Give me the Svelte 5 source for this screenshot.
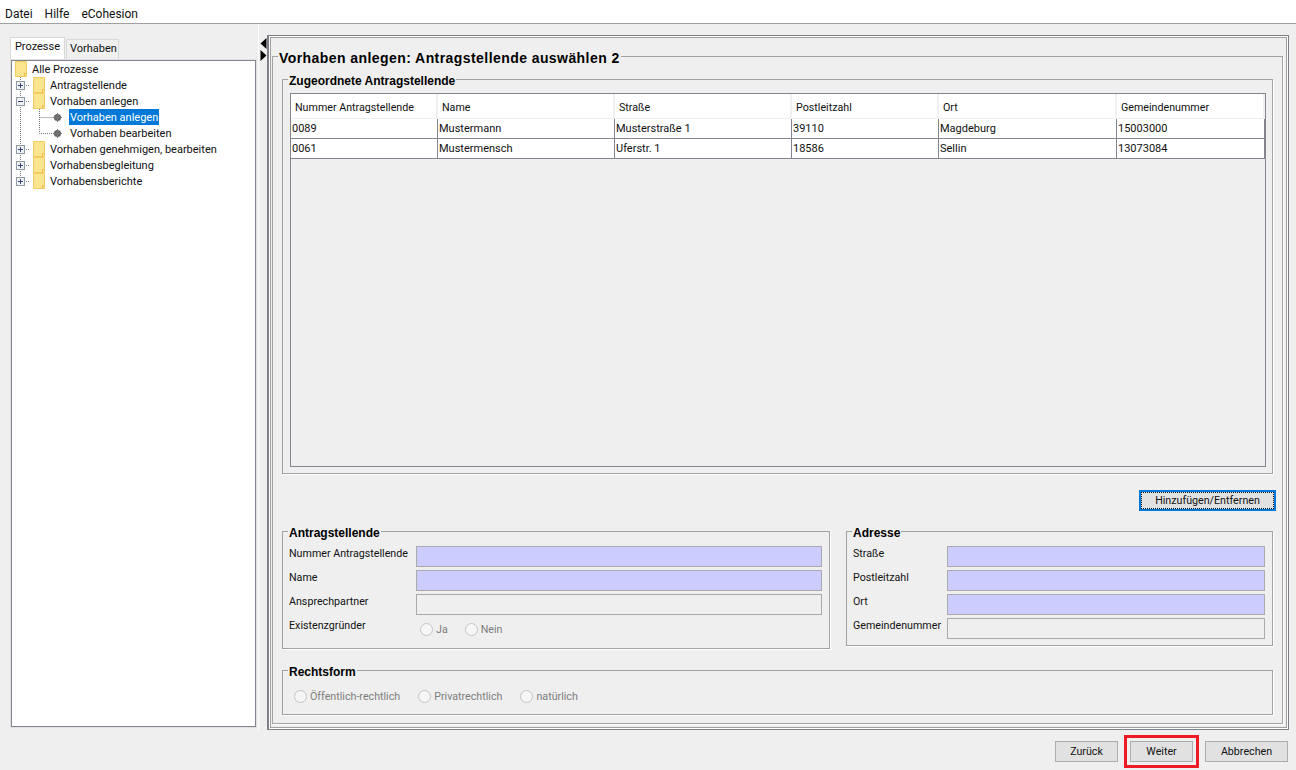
<script>
	const tree = [
		{ label: "Alle Prozesse", kind: "root", gutter: 19 },
		{ label: "Antragstellende", kind: "plus", gutter: 37 },
		{ label: "Vorhaben anlegen", kind: "minus", gutter: 37 },
		{ label: "Vorhaben anlegen", kind: "leaf", gutter: 57, selected: true },
		{ label: "Vorhaben bearbeiten", kind: "leaf", gutter: 57, last: true },
		{ label: "Vorhaben genehmigen, bearbeiten", kind: "plus", gutter: 37 },
		{ label: "Vorhabensbegleitung", kind: "plus", gutter: 37 },
		{ label: "Vorhabensberichte", kind: "plus", gutter: 37, end: true },
	];

	const columns = [
		{ name: "Nummer Antragstellende", width: 147 },
		{ name: "Name", width: 177 },
		{ name: "Straße", width: 177 },
		{ name: "Postleitzahl", width: 147 },
		{ name: "Ort", width: 178 },
		{ name: "Gemeindenummer", width: 148 },
	];

	const rows = [
		["0089", "Mustermann", "Musterstraße 1", "39110", "Magdeburg", "15003000"],
		["0061", "Mustermensch", "Uferstr. 1", "18586", "Sellin", "13073084"],
	];
</script>

{#snippet folder(x)}
	<g transform="translate({x} 0)">
		<path d="M.5 .5H11.5V15.5H.5Z" fill="#fde48f" stroke="#f2cc5e" />
		<path d="M9.5 12.5H11.5M9.5 12.5V15.5" fill="none" stroke="#eebd45" />
	</g>
{/snippet}

<div class="window">
	<nav class="menu">
		<span>Datei</span>
		<span>Hilfe</span>
		<span>eCohesion</span>
	</nav>

	<div class="main">
		<aside class="left">
			<div class="tabs">
				<span class="tab active">Prozesse</span>
				<span class="tab">Vorhaben</span>
			</div>
			<div class="tree">
				{#each tree as node}
					<div class="node">
						<svg class="gutter" width={node.gutter} height="16" viewBox="0 0 {node.gutter} 16">
							{#if node.kind === "root"}
								{@render folder(3)}
							{:else if node.kind === "leaf"}
								<path d="M8.5 0V16" class="dots" />
								<path d={node.last ? "M27.5 0V8.5H41" : "M27.5 0V16M27.5 8.5H41"} class="dots" />
								<circle cx="45.5" cy="8.5" r="3.6" fill="#666" />
								<path d="M45.5 4V13M41 8.5H50" stroke="#777" fill="none" />
							{:else}
								<path d={node.end ? "M8.5 0V8" : "M8.5 0V16"} class="dots" />
								<path d="M14 8.5H18" class="dots" />
								<rect x="4.5" y="4.5" width="8" height="8" fill="#eef0f4" stroke="#8f9aa8" />
								<path d={node.kind === "plus" ? "M6 8.5H11M8.5 6V11" : "M6 8.5H11"} stroke="#3a4a7a" fill="none" />
								{@render folder(21)}
							{/if}
						</svg>
						<span class="label" class:selected={node.selected}>{node.label}</span>
					</div>
				{/each}
			</div>
		</aside>

		<div class="splitter">
			<svg width="7" height="24" viewBox="0 0 7 24">
				<path d="M6.5 0V11L0.5 5.5Z" fill="#000" />
				<path d="M.5 12V23L6.5 17.5Z" fill="#000" />
			</svg>
		</div>

		<section class="panel">
			<fieldset class="group outer">
				<legend class="title">Vorhaben anlegen: Antragstellende auswählen 2</legend>

				<fieldset class="group assigned">
					<legend>Zugeordnete Antragstellende</legend>
					<div class="table">
						<div class="thead">
							{#each columns as col}
								<div class="th" style="width: {col.width}px">{col.name}</div>
							{/each}
						</div>
						{#each rows as row}
							<div class="tr">
								{#each row as cell, i}
									<div class="td" style="width: {columns[i].width}px">{cell}</div>
								{/each}
							</div>
						{/each}
					</div>
				</fieldset>

				<div class="action">
					<button class="btn focused"><span>Hinzufügen/Entfernen</span></button>
				</div>

				<div class="pair">
					<fieldset class="group applicant">
						<legend>Antragstellende</legend>
						<div class="form">
							<span class="fl">Nummer Antragstellende</span>
							<div class="input req"></div>
							<span class="fl">Name</span>
							<div class="input req"></div>
							<span class="fl">Ansprechpartner</span>
							<div class="input"></div>
							<span class="fl">Existenzgründer</span>
							<div class="radios inset">
								<label><input type="radio" disabled />Ja</label>
								<label><input type="radio" disabled />Nein</label>
							</div>
						</div>
					</fieldset>

					<fieldset class="group address">
						<legend>Adresse</legend>
						<div class="form">
							<span class="fl">Straße</span>
							<div class="input req"></div>
							<span class="fl">Postleitzahl</span>
							<div class="input req"></div>
							<span class="fl">Ort</span>
							<div class="input req"></div>
							<span class="fl">Gemeindenummer</span>
							<div class="input"></div>
						</div>
					</fieldset>
				</div>

				<fieldset class="group legal">
					<legend>Rechtsform</legend>
					<div class="radios">
						<label><input type="radio" disabled />Öffentlich-rechtlich</label>
						<label><input type="radio" disabled />Privatrechtlich</label>
						<label><input type="radio" disabled />natürlich</label>
					</div>
				</fieldset>
			</fieldset>
		</section>
	</div>

	<footer class="footer">
		<button class="btn back">Zurück</button>
		<button class="btn next">Weiter</button>
		<button class="btn cancel">Abbrechen</button>
	</footer>
</div>

<style>
	:global(body) {
		margin: 0;
		background: #efefef;
	}
	.window {
		width: 1296px;
		height: 770px;
		display: flex;
		flex-direction: column;
		overflow: hidden;
		background: #efefef;
		color: #111;
		font-family: Roboto, "Liberation Sans", sans-serif;
		font-size: 10.7px;
	}
	.menu {
		flex: none;
		display: flex;
		align-items: center;
		gap: 12px;
		padding: 4px 5px 0;
		height: 19px;
		background: #fff;
		border-bottom: 1px solid #a0a0a0;
		font-size: 12px;
	}
	.main {
		flex: none;
		height: 706px;
		display: flex;
	}
	.left {
		width: 247px;
		margin-left: 10px;
		display: flex;
		flex-direction: column;
		padding-top: 13px;
	}
	.tabs {
		display: flex;
		align-items: flex-end;
		height: 23px;
		flex: none;
	}
	.tab {
		height: 20px;
		line-height: 18px;
		margin-left: 1px;
		padding: 0 1px 0 3px;
		width: 47px;
		text-align: center;
		border: 1px solid #d9d9d9;
		border-bottom: none;
		background: #f0f0f0;
		font-size: 11px;
	}
	.tab.active {
		height: 22px;
		line-height: 18px;
		margin-left: 0;
		padding: 0 2px;
		width: 49px;
		background: #fff;
	}
	.tree {
		width: 245px;
		height: 667px;
		box-sizing: border-box;
		margin-left: 1px;
		border: 1px solid #85858f;
		background: #fff;
		box-shadow: 0 0 0 1px #e0e0e0;
		font-size: 11px;
	}
	.node {
		height: 16px;
		display: flex;
		align-items: center;
		white-space: nowrap;
	}
	.gutter {
		flex: none;
	}
	.label {
		display: block;
		height: 16px;
		line-height: 18px;
		padding: 0 1px;
	}
	.label.selected {
		background: #0078d7;
		color: #fff;
	}
	.dots {
		stroke: #777;
		stroke-dasharray: 1 1;
		fill: none;
	}
	.splitter {
		width: 9px;
		padding-top: 14px;
		box-sizing: border-box;
		display: flex;
		justify-content: flex-end;
		border-left: 1px solid #fff;
		margin-left: 1px;
	}
	.panel {
		width: 1022px;
		height: 695px;
		margin-top: 11px;
		box-sizing: border-box;
		border: 1px solid #7f7f88;
		border-left-width: 2px;
		padding: 10px 0 0 3px;
		box-shadow:
			inset 0 0 0 1px #fff,
			inset 0 0 0 2px #a0a0a0;
	}
	.group {
		margin: 0;
		min-width: 0;
		box-sizing: border-box;
		border: 1px solid #a3a3a3;
		box-shadow: 1px 1px 0 #fff;
		padding: 0 6px;
	}
	legend {
		margin-left: -1px;
		padding: 3px 1px 0;
		font-family: "Liberation Sans", Arial, sans-serif;
		font-weight: 700;
		font-size: 12px;
		line-height: 14px;
		color: #000;
	}
	legend.title {
		margin-left: -4px;
		padding: 4px 1px 0;
		font-size: 14px;
		line-height: 16px;
		letter-spacing: 0.43px;
	}
	.outer {
		width: 1011px;
		height: 678px;
		padding: 0 9px;
	}
	.assigned {
		height: 403px;
		margin-top: 5px;
		padding: 5px 6px 0 7px;
	}
	.assigned legend {
		margin-left: -2px;
	}
	.table {
		height: 374px;
		box-sizing: border-box;
		border: 1px solid #85858f;
		background: #efefef;
		overflow: hidden;
	}
	.thead {
		display: flex;
		height: 25px;
		box-sizing: border-box;
		background: #fff;
		border-bottom: 1px solid #f0f0f0;
	}
	.th {
		box-sizing: border-box;
		flex: none;
		border-right: 2px solid #f0f0f0;
		padding: 1px 4px 0;
		line-height: 25px;
	}
	.tr {
		display: flex;
		height: 20px;
		background: #fff;
		border-bottom: 1px solid #85858f;
		box-sizing: border-box;
	}
	.td {
		box-sizing: border-box;
		flex: none;
		border-right: 1px solid #85858f;
		padding: 0 1px;
		line-height: 20px;
		font-size: 11px;
	}
	.action {
		display: flex;
		justify-content: flex-end;
		margin: 16px -3px 0 0;
	}
	.btn {
		font: inherit;
		color: #111;
		height: 21px;
		padding: 0;
		box-sizing: border-box;
		background: #e1e1e1;
		border: 1px solid #adadad;
	}
	.focused {
		width: 137px;
		border: 2px solid #0078d7;
	}
	.focused span {
		display: block;
		height: 17px;
		line-height: 15px;
		box-sizing: border-box;
		border: 1px dotted #111;
	}
	.pair {
		display: flex;
		align-items: flex-start;
		gap: 16px;
		margin-top: 12px;
		height: 132px;
	}
	.applicant {
		width: 548px;
		height: 126px;
	}
	.address {
		width: 427px;
		height: 123px;
	}
	.form {
		display: grid;
		grid-auto-rows: 21px;
		row-gap: 3px;
		margin-top: 6px;
	}
	.applicant .form {
		grid-template-columns: 127px 406px;
	}
	.address .form {
		grid-template-columns: 94px 318px;
	}
	.fl {
		line-height: 15px;
	}
	.input {
		box-sizing: border-box;
		border: 1px solid #a9a9a9;
		background: #efefef;
	}
	.input.req {
		background: #ccccff;
	}
	.radios {
		display: flex;
		color: #7d7d7d;
		align-items: center;
	}
	.radios.inset {
		padding: 2px 0 0 4px;
		gap: 17px;
	}
	.radios label {
		display: flex;
		align-items: center;
		gap: 3px;
	}
	input[type="radio"] {
		appearance: none;
		margin: 0;
		width: 13px;
		height: 13px;
		box-sizing: border-box;
		border: 1px solid #c4c4c4;
		border-radius: 50%;
		background: #f6f6f6;
	}
	.legal {
		height: 53px;
		margin-top: 7px;
		padding-left: 11px;
	}
	.legal legend {
		margin-left: -6px;
	}
	.legal .radios {
		margin-top: 11px;
		gap: 18px;
	}
	.footer {
		flex: 1;
		display: flex;
		align-items: flex-start;
		gap: 12px;
		justify-content: flex-end;
		padding: 11px 8px 0 0;
	}
	.back,
	.next {
		width: 63px;
	}
	.cancel {
		width: 83px;
	}
	.next {
		outline: 3px solid #ed1c24;
		outline-offset: 3px;
	}
</style>
